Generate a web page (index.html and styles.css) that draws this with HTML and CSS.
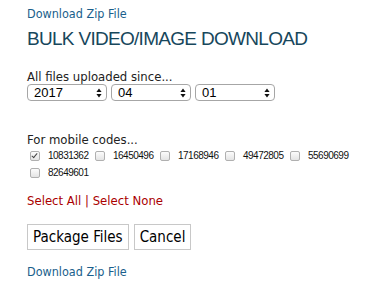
FILE: index.html
```html
<!DOCTYPE html>
<html lang="en">
<head>
    <meta charset="UTF-8">
    <title>Bulk Download</title>
    <link rel="stylesheet" href="styles.css">
</head>
<body>
    <div class="page">
        <a class="zip-link" href="#">Download Zip File</a>
        <h1>BULK VIDEO/IMAGE DOWNLOAD</h1>

        <div class="since">
            <label>All files uploaded since...</label>
            <div class="date-row">
                <span class="select-wrap">
                    <select class="date-select"><option>2017</option></select>
                    <svg class="updown" width="6" height="10" viewBox="0 0 6 10"><path d="M3 0.5 L5.6 4 H0.4 Z M3 9.5 L5.6 6 H0.4 Z" fill="#111"/></svg>
                </span>
                <span class="select-wrap">
                    <select class="date-select"><option>04</option></select>
                    <svg class="updown" width="6" height="10" viewBox="0 0 6 10"><path d="M3 0.5 L5.6 4 H0.4 Z M3 9.5 L5.6 6 H0.4 Z" fill="#111"/></svg>
                </span>
                <span class="select-wrap">
                    <select class="date-select"><option>01</option></select>
                    <svg class="updown" width="6" height="10" viewBox="0 0 6 10"><path d="M3 0.5 L5.6 4 H0.4 Z M3 9.5 L5.6 6 H0.4 Z" fill="#111"/></svg>
                </span>
            </div>
        </div>

        <div class="codes">
            <label>For mobile codes...</label>
            <div class="code-list">
                <label class="code"><input type="checkbox" checked><span>10831362</span></label>
                <label class="code"><input type="checkbox"><span>16450496</span></label>
                <label class="code"><input type="checkbox"><span>17168946</span></label>
                <label class="code"><input type="checkbox"><span>49472805</span></label>
                <label class="code"><input type="checkbox"><span>55690699</span></label>
                <label class="code"><input type="checkbox"><span>82649601</span></label>
            </div>
        </div>

        <div class="select-links">
            <a href="#">Select All</a> | <a href="#">Select None</a>
        </div>

        <div class="actions">
            <button class="btn">Package Files</button>
            <button class="btn">Cancel</button>
        </div>

        <a class="zip-link" href="#">Download Zip File</a>
    </div>
</body>
</html>
```

FILE: styles.css
```css
body {
    margin: 0;
    background: #fff;
    font-family: "DejaVu Sans Condensed", "DejaVu Sans", sans-serif;
    font-stretch: condensed;
    color: #222;
}
.page {
    padding: 7px 10px 7px 27px;
}
.zip-link {
    display: block;
    color: #1a5f8c;
    text-decoration: none;
    font-size: 12.5px;
    line-height: 14px;
}
h1 {
    margin: 7px 0 20px;
    font-family: "Liberation Sans", sans-serif;
    font-stretch: normal;
    font-weight: normal;
    font-size: 19px;
    line-height: 22px;
    color: #17475c;
    letter-spacing: -0.7px;
}
.since label,
.codes > label {
    display: block;
    font-size: 13px;
    line-height: 14px;
}
.date-row {
    display: flex;
    gap: 4px;
}
.select-wrap {
    position: relative;
    display: block;
}
.date-select {
    appearance: none;
    display: block;
    width: 80px;
    height: 17px;
    font-family: "Liberation Sans", sans-serif;
    font-size: 13px;
    color: #000;
    border: 1px solid #a6a6a6;
    border-radius: 4px;
    background: #fff;
    padding: 0 6px;
}
.updown {
    position: absolute;
    right: 5px;
    top: 4px;
    pointer-events: none;
}
.codes {
    margin-top: 32px;
}
.code-list {
    display: flex;
    flex-wrap: wrap;
    row-gap: 2px;
    margin-top: 1px;
}
.code {
    display: flex;
    align-items: center;
    font-family: "Liberation Sans", sans-serif;
    font-stretch: normal;
    font-size: 10px;
    letter-spacing: -0.5px;
    color: #111;
    height: 15px;
    margin-right: 4px;
}
.code span {
    width: 40px;
}
.code input {
    appearance: none;
    box-sizing: border-box;
    position: relative;
    width: 10px;
    height: 10px;
    margin: 0 8px 0 3px;
    border: 1px solid #b0b0b0;
    border-radius: 2px;
    background: linear-gradient(#fcfcfc, #e4e4e4);
}
.code input:checked::after {
    content: "";
    position: absolute;
    left: 2px;
    top: 0;
    width: 2px;
    height: 5px;
    border: solid #444;
    border-width: 0 1.5px 1.5px 0;
    transform: rotate(40deg);
}
.select-links {
    margin-top: 14px;
    font-size: 13px;
    line-height: 14px;
    color: #a00;
}
.select-links a {
    color: #a00;
    text-decoration: none;
}
.actions {
    display: flex;
    gap: 5px;
    margin: 16px 0 15px;
}
.btn {
    font-family: "DejaVu Sans Condensed", "DejaVu Sans", sans-serif;
    font-stretch: condensed;
    font-size: 15px;
    background: #fff;
    border: 1px solid #c8c8c8;
    border-radius: 0;
    height: 26px;
    padding: 0 5px;
    color: #000;
}
```
